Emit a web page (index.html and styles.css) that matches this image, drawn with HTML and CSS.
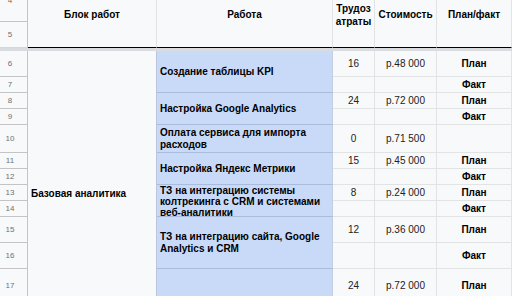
FILE: index.html
```html
<!DOCTYPE html>
<html lang="ru">
<head>
<meta charset="utf-8">
<title>Базовая аналитика</title>
<link rel="stylesheet" href="styles.css">
</head>
<body>
<div class="sheet">
  <div class="rh">4</div>
  <div class="hd a span2">Блок работ</div>
  <div class="hd b span2">Работа</div>
  <div class="hd c span2"><span>Трудоз<br>атраты</span></div>
  <div class="hd d span2">Стоимость</div>
  <div class="hd e span2">План/факт</div>
  <div class="rh rh5">5</div>
  <div class="freeze"></div>

  <div class="rh">6</div>
  <div class="cell a block">Базовая аналитика</div>
  <div class="cell b span2"><span>Создание таблицы KPI</span></div>
  <div class="cell c">16</div>
  <div class="cell d">р.48 000</div>
  <div class="cell e">План</div>

  <div class="rh">7</div>
  <div class="cell c"></div>
  <div class="cell d"></div>
  <div class="cell e">Факт</div>

  <div class="rh">8</div>
  <div class="cell b span2"><span>Настройка Google Analytics</span></div>
  <div class="cell c">24</div>
  <div class="cell d">р.72 000</div>
  <div class="cell e">План</div>

  <div class="rh">9</div>
  <div class="cell c"></div>
  <div class="cell d"></div>
  <div class="cell e">Факт</div>

  <div class="rh">10</div>
  <div class="cell b"><span>Оплата сервиса для импорта расходов</span></div>
  <div class="cell c">0</div>
  <div class="cell d">р.71 500</div>
  <div class="cell e"></div>

  <div class="rh">11</div>
  <div class="cell b span2"><span>Настройка Яндекс Метрики</span></div>
  <div class="cell c">15</div>
  <div class="cell d">р.45 000</div>
  <div class="cell e">План</div>

  <div class="rh">12</div>
  <div class="cell c"></div>
  <div class="cell d"></div>
  <div class="cell e">Факт</div>

  <div class="rh">13</div>
  <div class="cell b span2 overflowing"><span>ТЗ на интеграцию системы колтрекинга с CRM и системами веб-аналитики</span></div>
  <div class="cell c">8</div>
  <div class="cell d">р.24 000</div>
  <div class="cell e">План</div>

  <div class="rh">14</div>
  <div class="cell c"></div>
  <div class="cell d"></div>
  <div class="cell e">Факт</div>

  <div class="rh">15</div>
  <div class="cell b span2"><span>ТЗ на интеграцию сайта, Google Analytics и CRM</span></div>
  <div class="cell c">12</div>
  <div class="cell d">р.36 000</div>
  <div class="cell e">План</div>

  <div class="rh">16</div>
  <div class="cell c"></div>
  <div class="cell d"></div>
  <div class="cell e">Факт</div>

  <div class="rh">17</div>
  <div class="cell b span2"><span></span></div>
  <div class="cell c">24</div>
  <div class="cell d">р.72 000</div>
  <div class="cell e">План</div>

  <div class="rh">18</div>
  <div class="cell c"></div>
  <div class="cell d"></div>
  <div class="cell e">Факт</div>
</div>
</body>
</html>
```

FILE: styles.css
```css
html, body {
  margin: 0;
  padding: 0;
  width: 512px;
  height: 296px;
  overflow: hidden;
  background: #f8f9fa;
}

.sheet {
  margin-top: -20px;
  display: grid;
  grid-template-columns: 28px 129px 176px 42px 62px 75px;
  grid-template-rows: 42px 26px 3px 26px 16px 16px 16px 28px 16px 16px 16px 16px 26px 26px 34px 34px;
  font-family: "Liberation Sans", Arial, sans-serif;
  font-size: 10px;
  color: #000;
}

.sheet > div {
  box-sizing: border-box;
  overflow: hidden;
  display: flex;
  align-items: center;
  border-right: 1px solid #e2e3e3;
  border-bottom: 1px solid #e2e3e3;
  background: #f8f9fa;
}

.rh {
  grid-column: 1;
  justify-content: center;
  padding-right: 7px;
  font-size: 8px;
  color: #707070;
  border-right-color: #c4c4c4 !important;
  border-bottom-color: #c4c4c4 !important;
}

.rh5 {
  border-bottom-color: #d4d6d9 !important;
}

.freeze {
  grid-column: 1 / -1;
  background: #d9dbde !important;
  border: none !important;
}

.a { grid-column: 2; }
.b { grid-column: 3; }
.c { grid-column: 4; }
.d { grid-column: 5; }
.e { grid-column: 6; }

.span2 { grid-row: span 2; }

.hd {
  justify-content: center;
  text-align: center;
  font-weight: bold;
  line-height: 13px;
  padding-top: 2px;
  border-bottom: 1px solid #000 !important;
}

.cell.a {
  padding-left: 3px;
  font-weight: bold;
  border-right-color: #b9c6dc;
}

.block {
  grid-row: span 13;
}

.cell.b {
  background: #c9daf8;
  padding-left: 3px;
  padding-right: 3px;
  font-weight: bold;
  line-height: 11.5px;
  border-right-color: #c3cee2;
  border-bottom-color: #a9bcdc;
}

.cell.b.overflowing {
  padding-top: 2px;
  line-height: 11px;
}

.cell.c,
.cell.d,
.cell.e {
  justify-content: center;
}

.cell.c,
.cell.d {
  color: #222;
}

.cell.e {
  font-weight: bold;
}
```
